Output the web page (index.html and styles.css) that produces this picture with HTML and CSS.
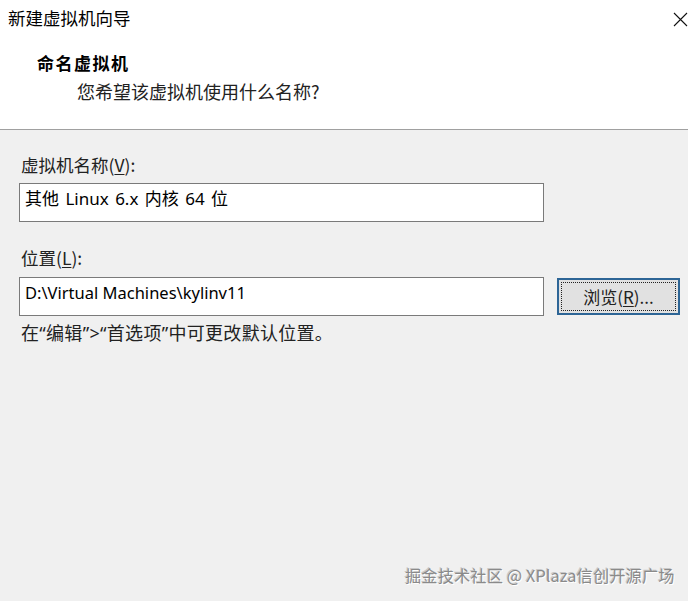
FILE: index.html
```html
<!DOCTYPE html>
<html lang="zh-CN">
<head>
<meta charset="utf-8">
<title>新建虚拟机向导</title>
<link rel="stylesheet" href="styles.css">
</head>
<body>
<div class="window">
  <div class="header">
    <div class="titlebar">
      <span class="title">新建虚拟机向导</span>
      <svg class="close" width="15" height="15" viewBox="0 0 15 15"><path d="M1 1 L14 14 M14 1 L1 14" stroke="#111" stroke-width="1.1" fill="none"/></svg>
    </div>
    <div class="heading">命名虚拟机</div>
    <div class="sub">您希望该虚拟机使用什么名称?</div>
  </div>
  <div class="content">
    <div class="label label-first">虚拟机名称(<u>V</u>):</div>
    <div class="field field-wide">其他 Linux 6.x 内核 64 位</div>
    <div class="label label-second">位置(<u>L</u>):</div>
    <div class="row">
      <div class="field field-path">D:\Virtual Machines\kylinv11</div>
      <div class="button"><span class="focus">浏览(<u>R</u>)...</span></div>
    </div>
    <div class="note">在“编辑”&gt;“首选项”中可更改默认位置。</div>
  </div>
  <div class="watermark">掘金技术社区 @ XPlaza信创开源广场</div>
</div>
</body>
</html>
```
FILE: styles.css
```css
html, body {
  margin: 0;
  padding: 0;
}
body {
  width: 688px;
  height: 601px;
  overflow: hidden;
  background: #f0f0f0;
  font-family: "Noto Sans CJK SC", "Noto Sans", sans-serif;
  color: #1a1a1a;
}
.window {
  position: relative;
  width: 688px;
  height: 601px;
  background: #f0f0f0;
}
.header {
  background: #ffffff;
  height: 129px;
  border-bottom: 1px solid #a0a0a0;
  box-sizing: content-box;
}
.titlebar {
  display: flex;
  justify-content: space-between;
  align-items: center;
  padding: 8px 0 0 8px;
  height: 20px;
}
.title {
  font-size: 17.5px;
  line-height: 20px;
  color: #000;
}
.close {
  margin-top: 2px;
  display: block;
}
.heading {
  margin: 25px 0 0 37px;
  font-size: 17px;
  line-height: 20px;
  font-weight: 700;
  letter-spacing: 1.5px;
  color: #000;
}
.sub {
  margin: 8px 0 0 77px;
  font-size: 18px;
  line-height: 20px;
  color: #222;
}
.content {
  padding: 0 0 0 19px;
}
.label {
  font-size: 17.5px;
  line-height: 20px;
  padding-left: 2px;
  color: #222;
}
.label u, .button u {
  text-decoration-thickness: 1px;
  text-underline-offset: 2px;
}
.label-first {
  margin-top: 25px;
}
.label-second {
  margin-top: 26px;
}
.field {
  box-sizing: border-box;
  height: 39px;
  border: 1px solid #7a7a7a;
  background: #fff;
  font-family: "Noto Sans", "Noto Sans CJK SC", sans-serif;
  font-size: 16.5px;
  line-height: 20px;
  padding: 5px 0 0 5px;
  color: #000;
}
.field-wide {
  width: 525px;
  margin-top: 8px;
  font-size: 17px;
  word-spacing: 2px;
}
.row {
  display: flex;
  align-items: center;
  gap: 13px;
  margin-top: 9px;
}
.field-path {
  width: 525px;
}
.button {
  box-sizing: border-box;
  width: 123px;
  height: 37px;
  border: 2px solid #2d6596;
  background: #e1e1e1;
  padding: 2px;
  display: flex;
}
.focus {
  flex: 1;
  border: 1px dotted #222;
  display: flex;
  align-items: center;
  justify-content: center;
  font-size: 17px;
  color: #222;
}
.note {
  margin-top: 7px;
  font-family: "Noto Sans", "Noto Sans CJK SC", sans-serif;
  font-size: 18px;
  letter-spacing: 0.3px;
  line-height: 20px;
  padding-left: 2px;
  color: #222;
}
.watermark {
  position: absolute;
  left: 405px;
  top: 564px;
  font-size: 16.2px;
  letter-spacing: 0.15px;
  line-height: 22px;
  color: #8a8a8a;
  text-shadow: 1px 1px 0 #ffffff, -1px -1px 0 #c8c8c8;
  white-space: nowrap;
}
```
